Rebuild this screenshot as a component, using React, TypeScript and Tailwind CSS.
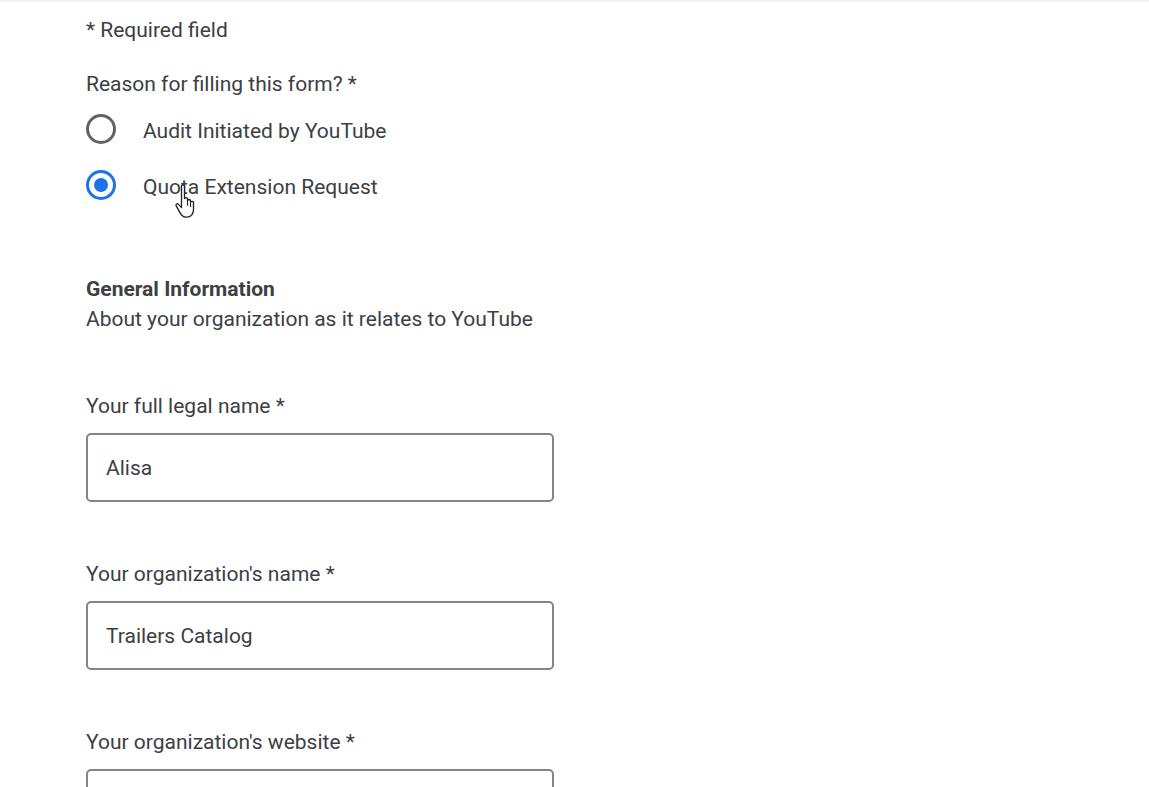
import React from "react";

const Radio = ({ checked, label }: { checked?: boolean; label: string }) => (
  <label className="flex h-[56px] items-center">
    <span
      className={`relative -top-[3px] flex h-[30px] w-[30px] items-center justify-center rounded-full border-[3px] ${
        checked ? "border-[#1a73e8]" : "border-[#5f6368]"
      }`}
    >
      {checked && <span className="h-[14px] w-[14px] rounded-full bg-[#1a73e8]" />}
    </span>
    <span className="ml-[27px]">{label}</span>
  </label>
);

const Field = ({ label, value }: { label: string; value?: string }) => (
  <div className="flex flex-col">
    <div className="h-[24px] leading-[24px]">{label}</div>
    <div className="mt-[15px] flex h-[69px] w-[468px] items-center rounded-[5px] border-2 border-[#80868b] px-[18px] pt-[3px]">
      {value}
    </div>
  </div>
);

export default function App() {
  return (
    <div className="relative h-[787px] w-[1149px] overflow-hidden bg-white font-['Roboto',sans-serif] text-[21px] text-[#3c4043]">
      <div className="h-[3px] w-full bg-gradient-to-b from-[#ececec] to-white" />
      <div className="pl-[86px]">
        <div className="mt-[15px] h-[24px] leading-[24px]">* Required field</div>
        <div className="mt-[30px] h-[24px] leading-[24px]">Reason for filling this form? *</div>
        <div className="mt-[8px] flex flex-col">
          <Radio label="Audit Initiated by YouTube" />
          <Radio checked label="Quota Extension Request" />
        </div>
        <div className="mt-[61px] h-[24px] font-bold leading-[24px]">General Information</div>
        <div className="mt-[6px] h-[24px] leading-[24px]">About your organization as it relates to YouTube</div>
        <div className="mt-[63px] flex flex-col gap-[60px]">
          <Field label="Your full legal name *" value="Alisa" />
          <Field label="Your organization's name *" value="Trailers Catalog" />
          <Field label="Your organization's website *" />
        </div>
      </div>
      <svg
        className="absolute left-[174px] top-[183px]"
        width="27"
        height="36"
        viewBox="0 0 22 30"
      >
        <path
          d="M6 2.5c0-1.2 2.5-1.2 2.5 0V13c0-1 2.5-1 2.5 0v1.5c0-1 2.5-1 2.5 0V16c0-1 2.5-1 2.5 0v6c0 3.5-2 6.5-5.5 6.5H9.5C6.8 28.5 5.2 26 3.8 23L1.5 18.8c-.5-1.2 1.2-2 2-1L6 20.5Z"
          fill="white"
          stroke="#222"
          strokeWidth="1.1"
          strokeLinejoin="round"
        />
        <path d="M11 14v5M13.5 16v4M16 17.5v3" stroke="#222" strokeWidth="0.9" fill="none" />
      </svg>
    </div>
  );
}
